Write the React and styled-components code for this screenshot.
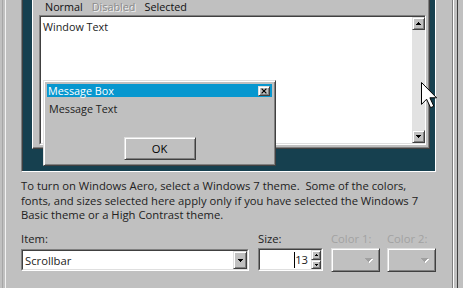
import React from 'react';
import styled, { createGlobalStyle } from 'styled-components';

const Global = createGlobalStyle`
  html, body { margin: 0; padding: 0; background: #c0c0c0; }
  body { width: 463px; height: 288px; overflow: hidden; }
`;

const UI = `"Open Sans", "Segoe UI", sans-serif`;

const Dialog = styled.div`
  position: relative;
  width: 463px;
  height: 288px;
  overflow: hidden;
  background: #c0c0c0;
  display: flex;
  font-family: ${UI};
  color: #222;
`;

const Sheet = styled.div`
  margin-left: 2px;
  width: 456px;
  box-sizing: border-box;
  border-left: 1px solid #a6a6a6;
  border-right: 1px solid #404040;
  padding: 0 4px 0 2px;
  display: flex;
`;

const Page = styled.div`
  flex: 1;
  box-sizing: border-box;
  border-left: 1px solid #f2f2f2;
  border-right: 1px solid #808080;
  box-shadow: 1px 0 0 #ffffff;
  padding-left: 15px;
  display: flex;
  flex-direction: column;
`;

const Preview = styled.div`
  position: relative;
  width: 415px;
  height: 172px;
  box-sizing: border-box;
  background: #16404f;
  border-left: 1px solid #808080;
  border-right: 1px solid #ffffff;
  border-bottom: 1px solid #ffffff;
  box-shadow: inset 1px 0 0 #404040;
  padding: 0 5px 22px 10px;
`;

const Window = styled.div`
  width: 398px;
  height: 149px;
  box-sizing: border-box;
  background: #c0c0c0;
  border-left: 1px solid #ffffff;
  border-right: 1px solid #404040;
  border-bottom: 1px solid #404040;
  box-shadow: inset -1px -1px 0 #808080;
  padding: 0 3px 3px 6px;
  display: flex;
  flex-direction: column;
`;

const MenuBar = styled.div`
  height: 15px;
  display: flex;
  align-items: flex-start;
  gap: 9px;
  padding-left: 6px;
  font-size: 10.8px;
  line-height: 13px;
`;

const MenuItem = styled.span`
  color: ${(p) => (p.$disabled ? '#8a8a8a' : '#111')};
  text-shadow: ${(p) => (p.$disabled ? '1px 1px 0 #f4f4f4' : 'none')};
`;

const SunkenOuter = styled.div`
  box-sizing: border-box;
  border: 1px solid;
  border-color: #808080 #ffffff #ffffff #808080;
  width: ${(p) => p.$w}px;
  height: ${(p) => p.$h}px;
  display: flex;
`;

const SunkenInner = styled.div`
  flex: 1;
  box-sizing: border-box;
  border: 1px solid;
  border-color: #404040 #dfdfdf #dfdfdf #404040;
  border-right-width: ${(p) => (p.$flushRight ? 0 : 1)}px;
  background: #ffffff;
  display: flex;
  min-width: 0;
`;

const TextArea = styled.div`
  flex: 1;
  padding: 3px 0 0 2px;
  font-size: 10.8px;
  line-height: 13px;
  color: #222;
`;

const ScrollBar = styled.div`
  width: 13px;
  background: #e2e2e2;
  display: flex;
  flex-direction: column;
  justify-content: space-between;
`;

const Raised = styled.div`
  box-sizing: border-box;
  background: #c0c0c0;
  border: 1px solid;
  border-color: #dfdfdf #404040 #404040 #dfdfdf;
  box-shadow: inset 1px 1px 0 #ffffff, inset -1px -1px 0 #808080;
  display: flex;
  align-items: center;
  justify-content: ${(p) => p.$justify || 'center'};
  width: ${(p) => p.$w}px;
  height: ${(p) => p.$h}px;
  padding-right: ${(p) => p.$pr || 0}px;
  flex: none;
`;

const MessageBox = styled.div`
  position: absolute;
  left: 21px;
  top: 80px;
  width: 233px;
  height: 86px;
  box-sizing: border-box;
  background: #c0c0c0;
  border: 1px solid;
  border-color: #dfdfdf #404040 #404040 #dfdfdf;
  box-shadow: inset 1px 1px 0 #ffffff, inset -1px -1px 0 #808080;
  padding: 3px;
  display: flex;
  flex-direction: column;
`;

const TitleBar = styled.div`
  height: 13px;
  background: #0797cf;
  color: #ffffff;
  display: flex;
  align-items: center;
  justify-content: space-between;
  padding: 0 2px 0 1px;
  font-size: 10.8px;
  line-height: 13px;
`;

const MessageBody = styled.div`
  flex: 1;
  display: flex;
  flex-direction: column;
  align-items: center;
  padding: 4px 0 2px;
`;

const MessageText = styled.div`
  align-self: stretch;
  padding: 1px 0 0 2px;
  font-size: 10.8px;
  line-height: 13px;
  color: #222;
`;

const OkButton = styled(Raised)`
  margin-top: auto;
  font-size: 11.2px;
  color: #000;
`;

const Info = styled.p`
  margin: 7px 0 0;
  font-size: 11.25px;
  line-height: 14.5px;
  white-space: pre;
  color: #222;
`;

const ControlsRow = styled.div`
  display: flex;
  align-items: flex-start;
  margin-top: 9px;
`;

const Field = styled.div`
  display: flex;
  flex-direction: column;
  margin-left: ${(p) => p.$ml || 0}px;
  width: ${(p) => p.$w}px;
`;

const Label = styled.div`
  font-size: 11.25px;
  line-height: 14.5px;
  height: 14.5px;
  color: ${(p) => (p.$disabled ? '#a2a2a2' : '#222')};
  margin-bottom: ${(p) => p.$gap}px;
`;

const ValueText = styled.div`
  flex: 1;
  display: flex;
  align-items: center;
  justify-content: ${(p) => (p.$right ? 'flex-end' : 'flex-start')};
  padding: 0 ${(p) => (p.$right ? 3 : 0)}px 0 ${(p) => (p.$right ? 0 : 2)}px;
  font-size: 11.25px;
  color: #222;
`;

const Caret = styled.span`
  display: inline-block;
  width: 1px;
  height: 16px;
  background: #000;
`;

const SpinColumn = styled.div`
  display: flex;
  flex-direction: column;
`;

const TriSvg = styled.svg`
  display: block;
  flex: none;
`;

const CursorSvg = styled.svg`
  position: absolute;
  left: 421px;
  top: 82px;
`;

function Tri({ dir = 'down', w = 5, color = '#000', emboss = false }) {
  const rows = Math.ceil(w / 2);
  const rects = [];
  for (let i = 0; i < rows; i++) {
    const y = dir === 'down' ? i : rows - 1 - i;
    if (emboss) {
      rects.push(<rect key={'s' + i} x={i + 1} y={y + 1} width={w - 2 * i} height={1} fill="#ffffff" />);
    }
  }
  for (let i = 0; i < rows; i++) {
    const y = dir === 'down' ? i : rows - 1 - i;
    rects.push(<rect key={i} x={i} y={y} width={w - 2 * i} height={1} fill={color} />);
  }
  return (
    <TriSvg width={w + (emboss ? 1 : 0)} height={rows + (emboss ? 1 : 0)} shapeRendering="crispEdges">
      {rects}
    </TriSvg>
  );
}

function CloseGlyph() {
  return (
    <TriSvg width="6" height="6" viewBox="0 0 6 6">
      <path d="M0.6 0.6 L5.4 5.4 M5.4 0.6 L0.6 5.4" stroke="#000" strokeWidth="1.2" fill="none" />
    </TriSvg>
  );
}

export default function App() {
  return (
    <>
      <Global />
      <Dialog>
        <Sheet>
          <Page>
            <Preview>
              <Window>
                <MenuBar>
                  <MenuItem>Normal</MenuItem>
                  <MenuItem $disabled>Disabled</MenuItem>
                  <MenuItem>Selected</MenuItem>
                </MenuBar>
                <SunkenOuter $w={387} $h={130}>
                  <SunkenInner $flushRight>
                    <TextArea>Window Text</TextArea>
                    <ScrollBar>
                      <Raised $w={13} $h={13}>
                        <Tri dir="up" w={5} />
                      </Raised>
                      <Raised $w={13} $h={13}>
                        <Tri dir="down" w={5} />
                      </Raised>
                    </ScrollBar>
                  </SunkenInner>
                </SunkenOuter>
              </Window>
              <MessageBox>
                <TitleBar>
                  <span>Message Box</span>
                  <Raised $w={12} $h={10}>
                    <CloseGlyph />
                  </Raised>
                </TitleBar>
                <MessageBody>
                  <MessageText>Message Text</MessageText>
                  <OkButton $w={72} $h={23}>OK</OkButton>
                </MessageBody>
              </MessageBox>
            </Preview>

            <Info>
              {'To turn on Windows Aero, select a Windows 7 theme.  Some of the colors,\n'}
              {'fonts, and sizes selected here apply only if you have selected the Windows 7\n'}
              {'Basic theme or a High Contrast theme.'}
            </Info>

            <ControlsRow>
              <Field $w={228}>
                <Label $gap={3}>Item:</Label>
                <SunkenOuter $w={228} $h={22}>
                  <SunkenInner>
                    <ValueText>Scrollbar</ValueText>
                    <Raised $w={14} $h={18}>
                      <Tri dir="down" w={5} />
                    </Raised>
                  </SunkenInner>
                </SunkenOuter>
              </Field>
              <Field $w={65} $ml={9}>
                <Label $gap={2}>Size:</Label>
                <SunkenOuter $w={65} $h={23}>
                  <SunkenInner>
                    <ValueText $right>
                      <Caret />
                      13
                    </ValueText>
                    <SpinColumn>
                      <Raised $w={10} $h={10}>
                        <Tri dir="up" w={3} />
                      </Raised>
                      <Raised $w={10} $h={9}>
                        <Tri dir="down" w={3} />
                      </Raised>
                    </SpinColumn>
                  </SunkenInner>
                </SunkenOuter>
              </Field>
              <Field $w={49} $ml={8}>
                <Label $gap={2} $disabled>Color 1:</Label>
                <Raised $w={49} $h={24} $justify="flex-end" $pr={6}>
                  <Tri dir="down" w={7} color="#a0a0a0" emboss />
                </Raised>
              </Field>
              <Field $w={49} $ml={7}>
                <Label $gap={2} $disabled>Color 2:</Label>
                <Raised $w={49} $h={24} $justify="flex-end" $pr={6}>
                  <Tri dir="down" w={7} color="#a0a0a0" emboss />
                </Raised>
              </Field>
            </ControlsRow>
          </Page>
        </Sheet>
        <CursorSvg width="18" height="27" viewBox="0 0 18 27">
          <path
            d="M0.5 0.5 L0.5 22.4 L5.6 17.2 L9.6 25.7 L12.8 24.2 L8.9 15.8 L15.6 15.8 Z"
            fill="#ffffff"
            stroke="#000000"
            strokeWidth="1"
            strokeLinejoin="miter"
          />
        </CursorSvg>
      </Dialog>
    </>
  );
}
